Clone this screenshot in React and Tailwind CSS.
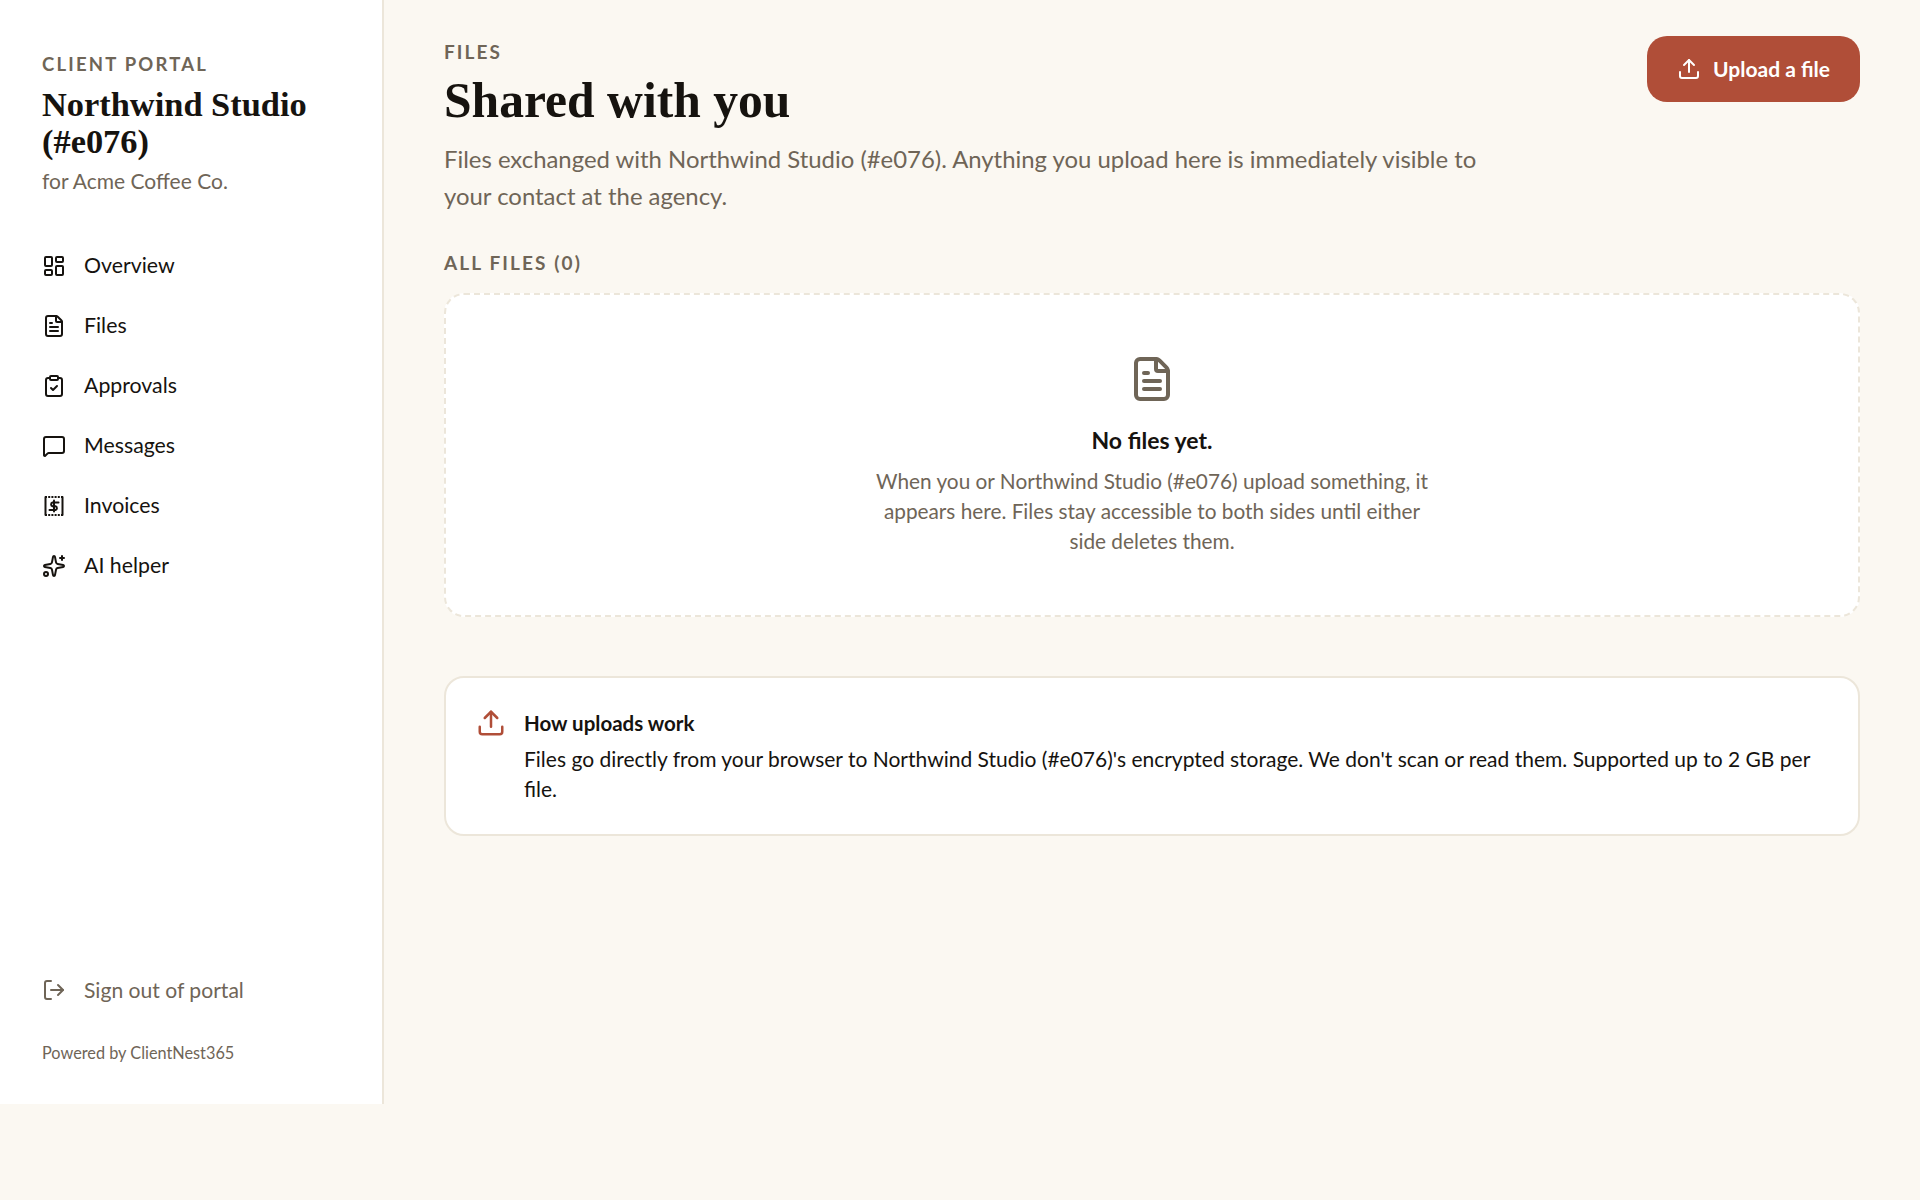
import React from 'react';
import { LayoutDashboard, FileText, ClipboardCheck, MessageSquare, Sparkles, LogOut, Upload } from 'lucide-react';

const sans = "font-['Lato','Noto_Sans',sans-serif]";

function InvoiceIcon({ className }) {
  return (
    <svg className={className} viewBox="0 0 24 24" fill="none" stroke="currentColor" strokeWidth="2" strokeLinejoin="round">
      <path d="M3.5 2.5v19M20.5 2.5v19" />
      <path d="M3 3h18M3 21h18" strokeDasharray="2 1.2" />
      <path d="M12 6.5v11" strokeLinecap="round" />
      <path d="M16.5 8.5h-6a2 2 0 0 0 0 3.8h3a2 2 0 0 1 0 3.8H7.5" strokeLinecap="round" />
    </svg>
  );
}

const navItems = [
  { label: 'Overview', icon: LayoutDashboard },
  { label: 'Files', icon: FileText },
  { label: 'Approvals', icon: ClipboardCheck },
  { label: 'Messages', icon: MessageSquare },
  { label: 'Invoices', icon: InvoiceIcon },
  { label: 'AI helper', icon: Sparkles },
];

export default function App() {
  return (
    <div className={`min-h-[1200px] bg-[#fbf8f2] flex items-start text-[#16130f] ${sans}`}>
      {/* SIDEBAR */}
      <aside className="w-[384px] h-[1104px] shrink-0 bg-white border-r-2 border-[#ece6da] px-[42px] pt-[52px] pb-[39px] flex flex-col">
        <div className="text-[18.5px] leading-[24px] font-bold tracking-[2.2px] text-[#6f6557]">CLIENT PORTAL</div>
        <h1 className="mt-[10px] font-['Liberation_Serif',serif] font-bold text-[34.4px] leading-[37px] text-[#16130f]">Northwind Studio (#e076)</h1>
        <div className="mt-[6px] text-[21px] leading-[30px] text-[#6f6557]">for Acme Coffee Co.</div>

        <nav className="mt-[40px] flex flex-col">
          {navItems.map(({ label, icon: Icon }) => (
            <div key={label} className="h-[60px] flex items-center gap-[18px]">
              <Icon className="w-[24px] h-[24px] shrink-0" strokeWidth={2} />
              <span className="text-[21.3px]">{label}</span>
            </div>
          ))}
        </nav>

        <div className="mt-auto">
          <div className="h-[60px] flex items-center gap-[18px] text-[#6f6557]">
            <LogOut className="w-[24px] h-[24px] shrink-0" strokeWidth={2} />
            <span className="text-[21.1px]">Sign out of portal</span>
          </div>
          <div className="mt-[21px] text-[16.3px] leading-[24px] text-[#6f6557]">Powered by ClientNest365</div>
        </div>
      </aside>

      {/* MAIN */}
      <main className="flex-1 px-[60px] pt-[36px]">
        <div className="flex justify-between items-start">
          <div className="max-w-[1056px] pt-[4px]">
            <div className="text-[19px] leading-[24px] font-bold tracking-[2.1px] text-[#6f6557]">FILES</div>
            <h2 className="mt-[7px] font-['Liberation_Serif',serif] font-bold text-[49.6px] leading-[60px] text-[#16130f]">Shared with you</h2>
            <p className="mt-[9px] text-[23.9px] leading-[37px] text-[#6f6557]">
              Files exchanged with Northwind Studio (#e076). Anything you upload here is immediately visible to your contact at the agency.
            </p>
          </div>
          <button className="h-[66px] w-[213px] rounded-[20px] bg-[#b04e38] text-white flex items-center justify-center gap-[12px] text-[21px] font-bold">
            <Upload className="w-[24px] h-[24px]" strokeWidth={2} />
            Upload a file
          </button>
        </div>

        <div className="mt-[37px] text-[19px] leading-[24px] font-bold tracking-[2.1px] text-[#6f6557]">ALL FILES (0)</div>

        <section className="mt-[18px] h-[324px] bg-white border-2 border-dashed border-[#ece6da] rounded-[20px] flex flex-col items-center pt-[60px] text-center">
          <FileText className="w-[48px] h-[48px] text-[#6f6557]" strokeWidth={2} />
          <div className="mt-[22px] text-[23px] leading-[30px] font-bold">No files yet.</div>
          <p className="mt-[11px] w-[560px] text-[20.8px] leading-[30px] text-[#6f6557]">
            When you or Northwind Studio (#e076) upload something, it appears here. Files stay accessible to both sides until either side deletes them.
          </p>
        </section>

        <section className="mt-[59px] h-[160px] bg-white border-2 border-[#ece6da] rounded-[20px] flex gap-[18px] pl-[30px] pr-[42px] pt-[30px]">
          <Upload className="w-[30px] h-[30px] shrink-0 text-[#b04e38]" strokeWidth={2} />
          <div>
            <div className="text-[20.5px] leading-[30px] font-bold">How uploads work</div>
            <p className="mt-[6px] text-[21px] leading-[30px]">
              Files go directly from your browser to Northwind Studio (#e076)'s encrypted storage. We don't scan or read them. Supported up to 2 GB per file.
            </p>
          </div>
        </section>
      </main>
    </div>
  );
}
